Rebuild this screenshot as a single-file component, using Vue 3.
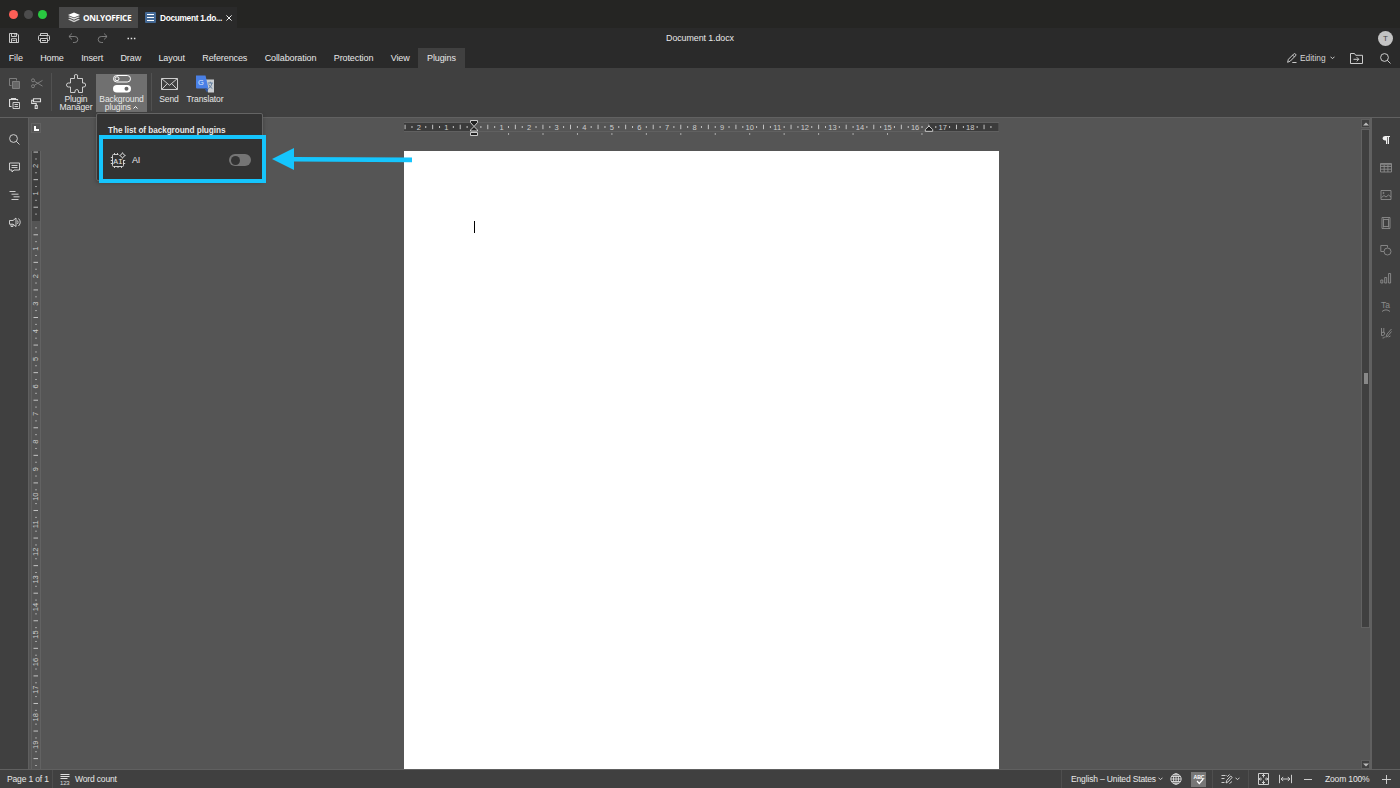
<template>
  <div class="app">
    <div class="titlebar">
      <div class="lights">
        <span class="light red"></span>
        <span class="light gray"></span>
        <span class="light green"></span>
      </div>
      <div class="brand-tab">
        <svg class="brand-logo" width="12" height="11" viewBox="0 0 12 11">
          <path d="M0 3 6 .4 12 3 6 5.6Z" fill="#fff" />
          <path d="M0 5.1 1.8 4.4 6 6.3 10.2 4.4 12 5.1 6 7.8Z" fill="#e4e4e4" />
          <path d="M0 7.5 1.8 6.8 6 8.7 10.2 6.8 12 7.5 6 10.3Z" fill="#cfcfcf" />
        </svg>
        <span>ONLYOFFICE</span>
      </div>
      <div class="doc-tab">
        <svg width="11" height="11" viewBox="0 0 11 11">
          <rect width="11" height="11" rx="1" fill="#446995" />
          <path d="M2 2.5h7M2 5.5h7M2 8.5h7" stroke="#fff" stroke-width="1" />
        </svg>
        <span class="doc-tab-name">Document 1.do...</span>
        <svg width="6" height="6" viewBox="0 0 6 6">
          <path d="m.4.4 5.2 5.2M5.6.4.4 5.6" stroke="#eee" stroke-width="1" />
        </svg>
      </div>
    </div>

    <div class="header">
      <div class="quick-row">
        <div class="quick">
          <svg width="10" height="10" viewBox="0 0 10 10" class="line">
            <path d="M.5.5H8L9.5 2v7.5h-9ZM2.5.5v3h5v-3M2.5 9.500V5.700h5v3.800M3.500 7.400h3M5.900.8v1.800" />
          </svg>
          <svg width="12" height="10" viewBox="0 0 12 10" class="line">
            <path d="M2.500 7.500h-1Q.5 7.500.5 6.500v-3q0-1 1-1h9q1 0 1 1v3q0 1-1 1h-1M2.500 2.500v-2h7v2M2.500 5.500h7v4h-7ZM8.600 4h1.200M4 7.500h4" />
          </svg>
          <svg width="11" height="10" viewBox="0 0 11 10" class="line dim">
            <path d="M4 .5.9 3.500 4 6.500M1 3.500h5.800q3 0 3 3t-3 3H5" />
          </svg>
          <svg width="11" height="10" viewBox="0 0 11 10" class="line dim">
            <path d="m7 .5 3.100 3L7 6.500M10 3.500H4.200q-3 0-3 3t3 3H6" />
          </svg>
          <svg width="9" height="3" viewBox="0 0 9 3">
            <path d="M.5.7H2v1.500H.5zM3.700.7h1.500v1.500H3.700zM6.900.7h1.500v1.500H6.900z" fill="#e6e6e6" />
          </svg>
        </div>
        <span class="doc-title">Document 1.docx</span>
        <span class="avatar">T</span>
      </div>
      <div class="tabs-row">
        <div class="tabs">
          <span v-for="tab in tabs" :key="tab" class="tab" :class="{ active: tab === activeTab }">{{ tab }}</span>
        </div>
        <div class="header-tools">
          <svg width="10" height="10" viewBox="0 0 10 10" class="line">
            <path d="m.6 9.300.8-3L6.700 1q.9-.8 1.800 0t0 1.800L3.300 8.100ZM5.600 2.100l1.800 1.800M5.300 9.500h4.200" />
          </svg>
          <span class="editing">Editing</span>
          <svg class="caret" width="5" height="4" viewBox="0 0 5 4"><path d="m.5.7 2 2 2-2" /></svg>
          <svg class="folder" width="13" height="11" viewBox="0 0 13 11">
            <path d="M.5.5h4l1.200 1.800h6.800v8.200H.5ZM3.500 6.300h5.200M6.700 4.200l2.100 2.100-2.100 2.100" />
          </svg>
          <svg width="11" height="11" viewBox="0 0 11 11" class="line">
            <circle cx="4.500" cy="4.500" r="3.900" /><path d="m7.300 7.300 3.200 3.200" />
          </svg>
        </div>
      </div>
    </div>

    <div class="toolbar">
      <div class="clip">
        <svg width="11" height="11" viewBox="0 0 11 11" class="line dim">
          <path d="M2.500 7.500h-2v-7h7v2" /><path d="M3.500 3.500h7v7h-7Z" fill="#666" />
        </svg>
        <svg width="12" height="11" viewBox="0 0 12 11" class="line dim">
          <circle cx="2" cy="2.300" r="1.500" /><circle cx="2" cy="8.200" r="1.500" />
          <path d="m3.300 3.200 8.200 4.900M3.300 7.300l8.200-4.900" />
        </svg>
        <svg width="11" height="11" viewBox="0 0 11 11" class="line">
          <path d="M2.500 8.500h-2v-7h2v-1h4v1h2v1M2.500 1.500h4" stroke-width="1.200" /><path d="M4 4.500h6.500v6H4Z" /><path d="M5.500 6.500h3.500M5.500 8.500h3.500" />
        </svg>
        <svg width="11" height="11" viewBox="0 0 11 11" class="line">
          <path d="M2.500.7h7v3h-7ZM2.500 2.200H.7v3.300h4.500v2M4.200 7.500h2v3h-2Z" stroke-width="1.100" />
        </svg>
      </div>
      <div class="sep"></div>
      <div class="big manager">
        <svg width="20" height="19" viewBox="0 0 20 19" class="line">
          <path d="M4.500 4.500h4V3Q7.500.5 10 .5T11.500 3v1.500h5V9H18q1.700.2 1.700 2T18 13h-1.500v5.500h-4V17q-.2-1.500-1.700-1.500T9 17v1.500H4.500V13H2.200Q.5 12.800.5 11t1.700-2h2.300Z" />
        </svg>
        <span>Plugin<br />Manager</span>
      </div>
      <div class="big background">
        <svg width="18" height="19" viewBox="0 0 18 19">
          <rect x=".5" y="1.500" width="17" height="6.500" rx="3.250" fill="none" stroke="#fff" />
          <circle cx="4" cy="4.750" r="2" fill="none" stroke="#fff" />
          <rect y="11" width="18" height="7.500" rx="3.750" fill="#fff" />
          <circle cx="13.500" cy="14.700" r="2" fill="#666" />
        </svg>
        <span>Background<br />plugins <svg class="up" width="5" height="3" viewBox="0 0 5 3"><path d="m.5 2.500 2-2 2 2" /></svg></span>
      </div>
      <div class="sep"></div>
      <div class="big send">
        <svg width="17" height="19" viewBox="0 0 17 19" class="line">
          <path d="M.5 4.500h16v11H.5ZM.8 4.700l7.700 6.600 7.700-6.600M.8 15.300l5.500-5.700M16.200 15.300l-5.500-5.700" />
        </svg>
        <span>Send</span>
      </div>
      <div class="big translator">
        <svg width="18" height="19" viewBox="0 0 18 19">
          <path d="M8 5.500h10v13h-6Z" fill="#c9cdd1" />
          <path d="M0 1.500h9.500l3 13H1q-1 0-1-1Z" fill="#4a80e6" />
          <path d="M8.500 14.500h4l-1.500 4Z" fill="#3157a4" />
          <text x="2" y="10.500" font-size="7.500" fill="#dce8ff">G</text>
          <path d="M11.800 9h5M14.300 7.700V9M16 9q-.8 4-3.300 5.500M12.700 10.500q1.300 2.800 3.600 4" fill="none" stroke="#56759b" stroke-width=".9" />
        </svg>
        <span>Translator</span>
      </div>
      <div class="popup">
        <div class="popup-title">The list of background plugins</div>
        <div class="popup-item">
          <svg width="16" height="17" viewBox="0 0 16 17" class="line">
            <path d="M8.500 2.500H3.500q-1 0-1 1v10q0 1 1 1h9q1 0 1-1V8M4.500 2.500V1M7.500 2.500V1M4.500 14.500V16M8 14.500V16M11.500 14.500V16M2.500 5.500H.8M2.500 8.500H.8M2.500 11.500H.8M13.500 11.500h1.700M13.500 8.500h1.700M12.500.6q.6 2.300 2.900 2.900-2.300.6-2.900 2.900-.6-2.300-2.900-2.900 2.300-.6 2.900-2.900Z" />
            <text x="3.300" y="11.500" class="chip-text">AI</text>
          </svg>
          <span class="popup-name">AI</span>
          <span class="switch"></span>
        </div>
        <div class="highlight"></div>
        <svg class="arrow" width="142" height="24" viewBox="0 0 142 24">
          <path d="M0 12 22 1v9.100l118 .5v4.600l-118-.7V23Z" fill="#15c5fd" />
        </svg>
      </div>
    </div>

    <div class="main">
      <div class="left-panel">
        <svg width="11" height="11" viewBox="0 0 11 11" class="line">
          <circle cx="4.500" cy="4.500" r="3.900" /><path d="m7.300 7.300 3.200 3.200" />
        </svg>
        <svg width="11" height="11" viewBox="0 0 11 11" class="line">
          <path d="M.5 1h10v7H5l-2 2V8H.5ZM2.500 3.500h6M2.500 5.500h6" />
        </svg>
        <svg width="11" height="11" viewBox="0 0 11 11" class="line">
          <path d="M.5 1.500h6M2.500 4.200h7M4.500 6.800h6M2.500 9.500h7" />
        </svg>
        <svg width="12" height="11" viewBox="0 0 12 11" class="line">
          <path d="M.5 3.500H4l3-2.500v8.500L4 7.200H.5ZM2 7.200v2.300h2V7.200M8.500 3.500q1.200 1.700 0 3.500M9.500 1.500q3.500 3.700 0 7.500" />
        </svg>
      </div>

      <div class="vruler-col">
        <div class="corner"></div>
        <svg class="vruler" width="10" height="619" viewBox="0 151 10 619">
          <rect x=".5" y="150.500" width="9" height="640" fill="#555" stroke="#626262" />
          <rect x="1" y="151" width="8" height="70" fill="#3e3e3e" />
          <g v-for="m in vMarks" :key="m.pos">
            <text v-if="m.label" :transform="`translate(7.300 ${m.pos}) rotate(-90)`" class="num">{{ m.label }}</text>
            <rect v-else :x="m.half ? 2.500 : 4.300" :y="m.pos - 0.5" :width="m.half ? 4.500 : 1.400" height="1" fill="#c4c4c4" />
          </g>
        </svg>
      </div>

      <div class="editor">
        <svg class="hruler" width="595" height="18" viewBox="404 120 595 18">
          <rect x="404.500" y="122.500" width="594" height="9" fill="#555" stroke="#606060" />
          <rect x="404" y="123" width="70" height="8" fill="#3b3b3b" />
          <rect x="929" y="123" width="69.500" height="8" fill="#3b3b3b" />
          <g v-for="m in hMarks" :key="m.pos">
            <text v-if="m.label" :x="m.pos" y="129.600" class="num">{{ m.label }}</text>
            <rect v-else :x="m.pos - 0.5" :y="m.half ? 124.700 : 126" width="1" :height="m.half ? 4.500 : 2" fill="#c4c4c4" />
          </g>
          <rect v-for="n in 13" :key="n" :x="473.6 + n * 34.45" y="133" width="1" height="2" fill="#ababab" />
          <path d="M470.500 120.500h7v2l-3.500 4-3.500-4ZM474 126.500l3.500 3.500v1h-7v-1ZM470.500 132.500h7v3h-7Z" fill="#222" stroke="#ccc" />
          <path d="m929 126 3.700 3.500v1.800h-7.400v-1.800Z" fill="#222" stroke="#ccc" />
        </svg>
        <div class="page"><span class="cursor"></span></div>
      </div>

      <div class="scrollbar">
        <span class="scroll-btn"><svg width="6" height="4" viewBox="0 0 6 4"><path d="M0 3.500 3 .5l3 3Z" fill="#bbb" /></svg></span>
        <span class="thumb"><i></i></span>
        <span class="scroll-btn last"><svg width="6" height="4" viewBox="0 0 6 4"><path d="m0 .5 3 3 3-3Z" fill="#bbb" /></svg></span>
      </div>

      <div class="right-panel">
        <svg width="12" height="12" viewBox="0 0 12 12">
          <path d="M5.500 2H10v1H9v7H7.800V3h-.7v7H6V6.500H5Q2.500 6.300 2.500 4.300T5 2Z" fill="#f0f0f0" />
        </svg>
        <svg width="12" height="12" viewBox="0 0 12 12" class="line faint">
          <path d="M.5 1.500h11v8.500H.5ZM.5 4.500h11M.5 7.200h11M4.200 3v7M7.900 3v7M.5 2.700h11" />
        </svg>
        <svg width="12" height="12" viewBox="0 0 12 12" class="line faint">
          <path d="M1 1.500h10v9H1ZM1.500 8.500 4 6.500l2 1.500 2.500-2L11 8" /><circle cx="3.500" cy="4" r=".6" />
        </svg>
        <svg width="12" height="12" viewBox="0 0 12 12" class="line faint">
          <path d="M2 .5h8v11H2ZM3.500 2.500h5M3.500 9.500h5M3.500 1.500v9M8.500 1.500v9" />
        </svg>
        <svg width="12" height="12" viewBox="0 0 12 12" class="line faint">
          <path d="M4 7.500H.8v-6H7.500v2" /><circle cx="7.500" cy="7.500" r="3.500" />
        </svg>
        <svg width="12" height="12" viewBox="0 0 12 12" class="line faint">
          <path d="M.8 8h2v3h-2ZM4.700 5.500h2V11h-2ZM8.600 1.500h2V11h-2Z" />
        </svg>
        <svg width="12" height="12" viewBox="0 0 12 12" class="line faint">
          <text x="1" y="7.700" class="art-text">Ta</text>
          <path d="M2 11.500q4-3.300 8 0" />
        </svg>
        <svg width="12" height="12" viewBox="0 0 12 12" class="line faint">
          <path d="M1.500 1v7.500q2 1 3-1.500T1.700 5.500M3.800 1v5M6 10.500 7 7l4.500-5M7 10l4.500-5.500M5 9.500q-1 2-2.500 1.500M8.500 10l2-1" />
        </svg>
      </div>
    </div>

    <div class="statusbar">
      <span class="pages">Page 1 of 1</span>
      <div class="words">
        <svg width="10" height="12" viewBox="0 0 10 12">
          <path d="M.5 1.500h9M.5 3.500h9M.5 5.500h7" stroke="#ddd" />
          <text x="0" y="11.700" font-size="6" fill="#ddd">123</text>
        </svg>
        <span>Word count</span>
      </div>
      <div class="status-right">
        <span class="lang">English – United States</span>
        <svg class="caret" width="5" height="4" viewBox="0 0 5 4"><path d="m.5.7 2 2 2-2" /></svg>
        <svg class="globe line" width="12" height="12" viewBox="0 0 12 12">
          <circle cx="6" cy="6" r="5.200" /><ellipse cx="6" cy="6" rx="2.500" ry="5.200" /><path d="M.8 6h10.400M6 .8v10.400M1.500 3.500h9M1.500 8.500h9" />
        </svg>
        <span class="spell">
          <svg width="12" height="12" viewBox="0 0 12 12">
            <text x="0.500" y="5.500" font-size="5.800" font-weight="bold" textLength="11" lengthAdjust="spacingAndGlyphs" fill="#fff">ABC</text>
            <path d="m4 8 2.300 2.500 3.900-4.500" fill="none" stroke="#fff" stroke-width="1.200" />
          </svg>
        </span>
        <i class="status-sep first"></i>
        <svg class="line track" width="12" height="12" viewBox="0 0 12 12">
          <path d="M.5 2.500h4M.5 5.500h3M.5 9.500h3M5 10l.7-2.500 4-4.500 1.500 1.300-4 4.500ZM5.500 2.500l1 1 2-2M8.500 10.500l2.500-2" />
        </svg>
        <svg class="caret" width="5" height="4" viewBox="0 0 5 4"><path d="m.5.7 2 2 2-2" /></svg>
        <i class="status-sep second"></i>
        <svg class="line fit" width="11" height="12" viewBox="0 0 11 12">
          <path d="M.5.5h10v11H.5ZM5.500 1v3.500M5.500 7.500V11M1 6h3M7 6h3M4 3l1.500-1.500L7 3M4 9l1.500 1.500L7 9M2.700 4.500 1.200 6l1.500 1.500M8.300 4.500 9.800 6 8.300 7.500" />
        </svg>
        <svg class="line width" width="13" height="10" viewBox="0 0 13 10">
          <path d="M.5.8v8.400M12.500.8v8.400M2 5h9M4.200 2.900 2.100 5l2.100 2.100M8.800 2.900 10.900 5 8.800 7.100" />
        </svg>
        <svg class="line" width="8" height="9" viewBox="0 0 8 9"><path d="M0 4.500h8" /></svg>
        <span class="zoom">Zoom 100%</span>
        <svg class="line" width="9" height="9" viewBox="0 0 9 9"><path d="M0 4.500h9M4.500 0v9" /></svg>
      </div>
    </div>
  </div>
</template>

<script setup>
import { ref } from 'vue'

const tabs = ['File', 'Home', 'Insert', 'Draw', 'Layout', 'References', 'Collaboration', 'Protection', 'View', 'Plugins']
const activeTab = ref('Plugins')

// one centimetre on the rulers
const CM = 27.57

// a mark every quarter: number on the whole, long tick on the half
function buildMarks(origin, from, to) {
  const marks = []
  for (let q = from; q <= to; q++) {
    if (q === 0) continue
    marks.push({
      pos: origin + (q * CM) / 4,
      half: q % 2 === 0,
      label: q % 4 === 0 ? String(Math.abs(q / 4)) : ''
    })
  }
  return marks
}

const hMarks = buildMarks(474, -10, 75)
const vMarks = buildMarks(221, -10, 79)
</script>

<style>
body {
  background: #555;
  overflow: hidden;
}
</style>

<style scoped>
.app {
  width: 1400px;
  height: 788px;
  display: flex;
  flex-direction: column;
  overflow: hidden;
  background: #555;
  color: #e8e8e8;
  font-family: "Liberation Sans", Arial, sans-serif;
  font-size: 9px;
  line-height: 10px;
  white-space: nowrap;
}

svg {
  display: block;
  flex: none;
}

.line {
  fill: none;
  stroke: #dcdcdc;
  stroke-width: 0.9;
}

.line.dim {
  stroke: #858585;
}

.line.faint {
  stroke: #8c8c8c;
}

.caret {
  fill: none;
  stroke: #ccc;
}

.titlebar {
  height: 28px;
  flex: none;
  display: flex;
  background: #252523;
}

.lights {
  display: flex;
  gap: 5.5px;
  padding: 9.500px 11px 0 9px;
  box-sizing: border-box;
  width: 59px;
}

.light {
  width: 9px;
  height: 9px;
  border-radius: 50%;
}

.red {
  background: #fe5f57;
}

.gray {
  background: #4c4c4c;
}

.green {
  background: #29c940;
}

.brand-tab {
  width: 79px;
  height: 21px;
  margin-top: 7px;
  display: flex;
  align-items: center;
  box-sizing: border-box;
  padding-left: 9px;
  gap: 3px;
  background: #484848;
  color: #fff;
  font-family: "Open Sans", sans-serif;
  font-size: 8.300px;
  font-weight: 700;
  letter-spacing: -0.32px;
}

.doc-tab {
  width: 99px;
  height: 21px;
  margin-top: 7px;
  display: flex;
  align-items: center;
  box-sizing: border-box;
  padding-left: 7px;
  background: #2a2a2a;
  color: #fff;
}

.doc-tab-name {
  width: 66px;
  margin-left: 4px;
  font-weight: 700;
  font-size: 8.300px;
  letter-spacing: -0.3px;
}

.header {
  height: 40px;
  flex: none;
  background: #2a2a2a;
}

.quick-row {
  height: 20px;
  display: grid;
  grid-template-columns: 1fr auto 1fr;
  align-items: center;
}

.quick {
  display: flex;
  align-items: center;
  gap: 18px;
  padding-left: 9px;
}

.quick svg:nth-child(2) {
  margin-left: 1px;
}

.quick svg:last-child {
  margin-left: 1px;
}

.doc-title {
  font-size: 8.900px;
  letter-spacing: -0.08px;
}

.avatar {
  justify-self: end;
  width: 15px;
  height: 15px;
  margin-right: 7px;
  border-radius: 50%;
  background: #c3c3c3;
  color: #444;
  font-size: 8px;
  line-height: 15px;
  text-align: center;
}

.tabs-row {
  height: 20px;
  display: flex;
  justify-content: space-between;
}

.tabs {
  display: flex;
}

.tab {
  padding: 0 8.700px;
  line-height: 20px;
  letter-spacing: -0.1px;
}

.tab.active {
  background: #404040;
}

.header-tools {
  display: flex;
  align-items: center;
  padding-right: 9px;
}

.editing {
  width: 26px;
  margin: 0 4px 0 3px;
  font-size: 8.400px;
  color: #d5d5d5;
}

.folder {
  margin: 0 17px 0 15px;
  fill: none;
  stroke: #ccc;
}

.toolbar {
  position: relative;
  height: 49px;
  flex: none;
  display: flex;
  background: #404040;
  border-bottom: 1px solid #616161;
}

.clip {
  display: grid;
  grid-template-columns: 22px 12px;
  grid-template-rows: 20px 20px;
  align-items: center;
  padding: 5px 8px 0 9px;
  align-content: start;
}

.sep {
  width: 1px;
  height: 38px;
  margin-top: 5px;
  background: #515151;
}

.big {
  display: flex;
  flex-direction: column;
  align-items: center;
  height: 38px;
  margin-top: 6px;
  font-size: 8.500px;
  letter-spacing: -0.1px;
  line-height: 8px;
  text-align: center;
}

.big > span {
  margin-top: 2px;
}

.manager {
  width: 44px;
  padding-left: 2px;
}

.background {
  width: 51px;
  background: #707070;
  margin-right: 4px;
  margin-left: -2px;
}

.background > svg {
  margin-top: -0.5px;
}

.up {
  display: inline-block;
  vertical-align: 1px;
  fill: none;
  stroke: #fff;
}

.send {
  width: 34px;
}

.translator {
  width: 38px;
}

/* dropdown hangs over the editing area */
.popup {
  position: absolute;
  left: 96px;
  top: 45px;
  width: 165px;
  height: 66px;
  background: #333;
  border: 1px solid #646464;
  border-radius: 2px;
  box-shadow: 0 2px 4px rgba(0, 0, 0, 0.25);
  z-index: 5;
}

.popup-title {
  padding: 12px 0 0 11px;
  font-weight: 700;
  font-size: 8.200px;
  letter-spacing: -0.06px;
  line-height: 10px;
}

.popup-item {
  display: flex;
  align-items: center;
  height: 34px;
  margin-top: 7px;
  padding: 0 11px 0 13px;
}

.chip-text {
  font-family: "Liberation Mono", monospace;
  font-size: 8px;
  fill: #e2e2e2;
  stroke: none;
}

.popup-name {
  margin-left: 6px;
  letter-spacing: -0.2px;
}

.switch {
  width: 22px;
  height: 12px;
  margin-left: auto;
  border-radius: 6px;
  background: #757575;
  box-sizing: border-box;
  padding: 1.5px;
}

.switch::before {
  content: "";
  display: block;
  width: 9px;
  height: 9px;
  border-radius: 50%;
  background: #333;
}

.highlight {
  position: absolute;
  left: 2px;
  top: 21px;
  width: 159px;
  height: 39.5px;
  border: 4px solid #15c5fd;
}

.arrow {
  position: absolute;
  left: 175px;
  top: 33px;
}

.main {
  height: 651px;
  flex: none;
  display: flex;
}

.left-panel {
  width: 29px;
  flex: none;
  display: flex;
  flex-direction: column;
  align-items: center;
  gap: 16.800px;
  padding-top: 16px;
  padding-left: 1px;
  box-sizing: border-box;
  background: #404040;
  border-right: 1px solid #5f5f5f;
}

.vruler-col {
  width: 15px;
  flex: none;
  padding: 5px 0 0 2px;
  box-sizing: border-box;
}

.corner {
  width: 10px;
  height: 10px;
  box-sizing: border-box;
  border: 1px solid #626262;
  padding: 2px;
  margin-bottom: 18px;
}

.corner::before {
  content: "";
  display: block;
  width: 3px;
  height: 3px;
  border-left: 2px solid #fff;
  border-bottom: 2px solid #fff;
}

.num {
  font-size: 7.500px;
  fill: #cdcdcd;
  text-anchor: middle;
}

.art-text {
  font-size: 8.500px;
  fill: #8c8c8c;
  stroke: none;
}

.editor {
  flex: 1;
  padding: 2px 0 0 360px;
}

.page {
  width: 595px;
  height: 618px;
  margin-top: 13px;
  background: #fff;
}

.cursor {
  display: inline-block;
  width: 1px;
  height: 12px;
  margin: 70px 0 0 70px;
  background: #000;
}

.scrollbar {
  width: 9px;
  flex: none;
  display: flex;
  flex-direction: column;
  padding: 1px 0 0 0;
}

.scroll-btn {
  height: 9px;
  box-sizing: border-box;
  display: flex;
  align-items: center;
  justify-content: center;
  background: #404040;
  border: 1px solid #5f5f5f;
}

.scroll-btn.last {
  margin-top: auto;
}

.thumb {
  height: 499px;
  margin-top: 1px;
  box-sizing: border-box;
  display: flex;
  align-items: center;
  justify-content: center;
  background: #404040;
  border: 1px solid #626262;
}

.thumb i {
  width: 4px;
  height: 11px;
  background: #888;
}

.right-panel {
  width: 30px;
  flex: none;
  display: flex;
  flex-direction: column;
  align-items: center;
  gap: 15.600px;
  padding-top: 16px;
  box-sizing: border-box;
  background: #404040;
  border-left: 2px solid #606060;
}

.statusbar {
  height: 19px;
  flex: none;
  box-sizing: border-box;
  display: flex;
  align-items: center;
  background: #404040;
  border-top: 1px solid #606060;
  font-size: 8.500px;
  letter-spacing: -0.15px;
}

.pages {
  box-sizing: border-box;
  width: 53px;
  padding-left: 7px;
  line-height: 18px;
  border-right: 1px solid #4e4e4e;
}

.words {
  display: flex;
  align-items: center;
  gap: 5px;
  margin-left: 7px;
}

.status-right {
  display: flex;
  align-items: center;
  margin-left: auto;
  padding-right: 9px;
  height: 18px;
}

.lang {
  border-left: 1px solid #4e4e4e;
  padding-left: 9px;
  width: 83px;
  margin-right: 4px;
  line-height: 18px;
}

.globe {
  margin-left: 7px;
}

.spell {
  width: 15px;
  height: 15px;
  margin-left: 9px;
  display: flex;
  align-items: center;
  justify-content: center;
  background: #777;
}

.status-sep {
  width: 1px;
  height: 18px;
  background: #4e4e4e;
}

.status-sep.first {
  margin: 0 8px 0 6px;
}

.status-sep.second {
  margin: 0 9px 0 8px;
}

.track {
  margin-right: 2px;
}

.width {
  margin: 0 12px 0 10px;
}

.zoom {
  width: 44px;
  margin: 0 13px 0 13px;
}
</style>
